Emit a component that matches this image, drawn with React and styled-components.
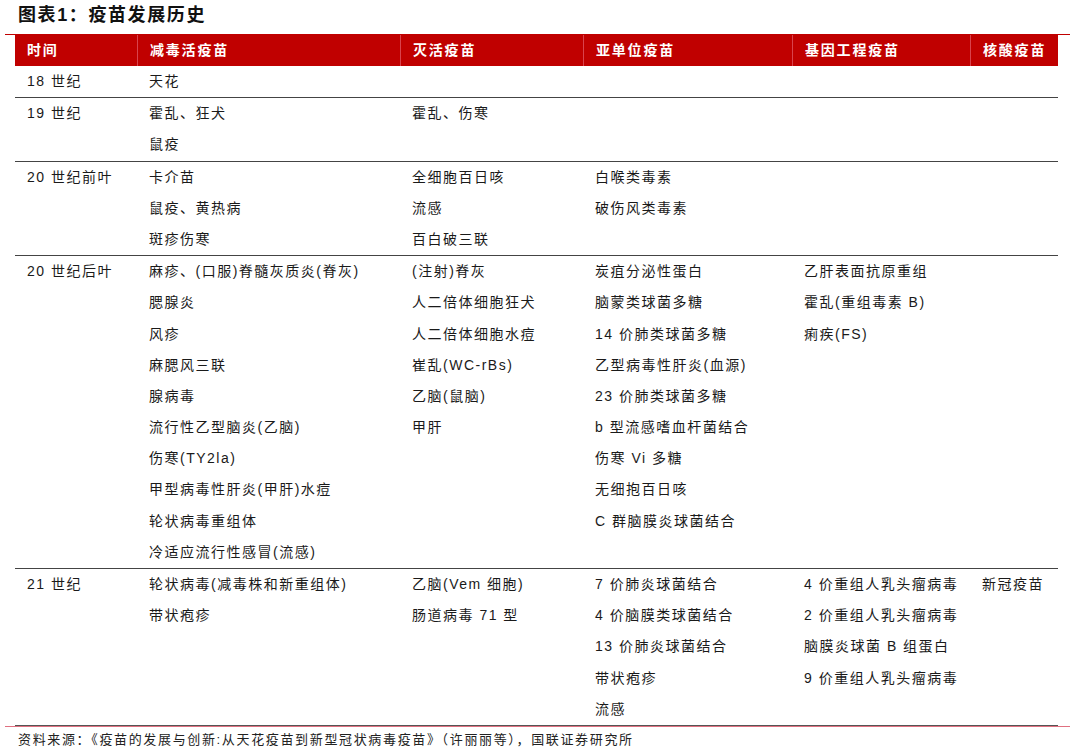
import React from "react";
import styled, { createGlobalStyle } from "styled-components";

const Global = createGlobalStyle`
  html, body { margin: 0; padding: 0; background: #ffffff; }
  body { font-family: "Liberation Sans", "Noto Sans CJK SC", sans-serif; color: #1a1a1a; }
`;

const COLS = "122px 263px 183px 209px 178px 88px";

const Page = styled.div`
  width: 1075px;
  height: 751px;
  display: flex;
  flex-direction: column;
  overflow: hidden;
`;

const Title = styled.h1`
  margin: 0;
  height: 34px;
  padding-left: 18px;
  box-sizing: border-box;
  font-size: 18px;
  line-height: 30px;
  font-weight: 700;
  letter-spacing: 1.6px;
  color: #111;
  font-family: "Liberation Sans", "Noto Sans CJK SC", sans-serif;
`;

const Frame = styled.div`
  margin: 0 5px;
  width: 1065px;
  border-top: 1px solid #c00000;
  border-bottom: 1px solid #e07080;
`;

const Table = styled.div`
  margin: 0 12px 0 10px;
  width: 1043px;
`;

const HeaderRow = styled.div`
  display: grid;
  grid-template-columns: ${COLS};
  height: 31px;
  background: #c00000;
`;

const HeaderCell = styled.div`
  padding-left: 12px;
  font-size: 14px;
  line-height: 31px;
  font-weight: 700;
  color: #ffffff;
  letter-spacing: 1.8px;
  border-left: ${(p) => (p.$first ? "none" : "1px solid #d9434d")};
  white-space: nowrap;
`;

const Row = styled.div`
  display: grid;
  grid-template-columns: ${COLS};
  border-bottom: 1px solid ${(p) => (p.$last ? "#555" : "#444")};
`;

const Cell = styled.div`
  display: flex;
  flex-direction: column;
  padding-left: 12px;
  min-width: 0;
`;

const Line = styled.div`
  height: 31.2px;
  line-height: 31.2px;
  font-size: 14px;
  letter-spacing: 1.5px;
  color: #1a1a1a;
  white-space: nowrap;
`;

const Source = styled.div`
  padding-left: 18px;
  padding-top: 3px;
  font-size: 13px;
  line-height: 20px;
  letter-spacing: 1.65px;
  color: #222;
  white-space: nowrap;
`;

const headers = ["时间", "减毒活疫苗", "灭活疫苗", "亚单位疫苗", "基因工程疫苗", "核酸疫苗"];

const rows = [
  { time: "18 世纪", cols: [["天花"], [], [], [], []] },
  { time: "19 世纪", cols: [["霍乱、狂犬", "鼠疫"], ["霍乱、伤寒"], [], [], []] },
  {
    time: "20 世纪前叶",
    cols: [
      ["卡介苗", "鼠疫、黄热病", "斑疹伤寒"],
      ["全细胞百日咳", "流感", "百白破三联"],
      ["白喉类毒素", "破伤风类毒素"],
      [],
      [],
    ],
  },
  {
    time: "20 世纪后叶",
    cols: [
      [
        "麻疹、(口服)脊髓灰质炎(脊灰)",
        "腮腺炎",
        "风疹",
        "麻腮风三联",
        "腺病毒",
        "流行性乙型脑炎(乙脑)",
        "伤寒(TY2la)",
        "甲型病毒性肝炎(甲肝)水痘",
        "轮状病毒重组体",
        "冷适应流行性感冒(流感)",
      ],
      ["(注射)脊灰", "人二倍体细胞狂犬", "人二倍体细胞水痘", "崔乱(WC-rBs)", "乙脑(鼠脑)", "甲肝"],
      [
        "炭疽分泌性蛋白",
        "脑蒙类球菌多糖",
        "14 价肺类球菌多糖",
        "乙型病毒性肝炎(血源)",
        "23 价肺类球菌多糖",
        "b 型流感嗜血杆菌结合",
        "伤寒 Vi 多糖",
        "无细抱百日咳",
        "C 群脑膜炎球菌结合",
      ],
      ["乙肝表面抗原重组", "霍乱(重组毒素 B)", "痢疾(FS)"],
      [],
    ],
  },
  {
    time: "21 世纪",
    cols: [
      ["轮状病毒(减毒株和新重组体)", "带状疱疹"],
      ["乙脑(Vem 细胞)", "肠道病毒 71 型"],
      ["7 价肺炎球菌结合", "4 价脑膜类球菌结合", "13 价肺炎球菌结合", "带状疱疹", "流感"],
      ["4 价重组人乳头瘤病毒", "2 价重组人乳头瘤病毒", "脑膜炎球菌 B 组蛋白", "9 价重组人乳头瘤病毒"],
      ["新冠疫苗"],
    ],
  },
];

export default function App() {
  return (
    <Page>
      <Global />
      <Title>图表1：疫苗发展历史</Title>
      <Frame>
        <Table>
          <HeaderRow>
            {headers.map((h, i) => (
              <HeaderCell key={h} $first={i === 0}>
                {h}
              </HeaderCell>
            ))}
          </HeaderRow>
          {rows.map((r, ri) => (
            <Row key={r.time} $last={ri === rows.length - 1}>
              <Cell>
                <Line>{r.time}</Line>
              </Cell>
              {r.cols.map((c, ci) => (
                <Cell key={ci}>
                  {c.map((t) => (
                    <Line key={t}>{t}</Line>
                  ))}
                </Cell>
              ))}
            </Row>
          ))}
        </Table>
      </Frame>
      <Source>资料来源：《疫苗的发展与创新:从天花疫苗到新型冠状病毒疫苗》（许丽丽等），国联证券研究所</Source>
    </Page>
  );
}
